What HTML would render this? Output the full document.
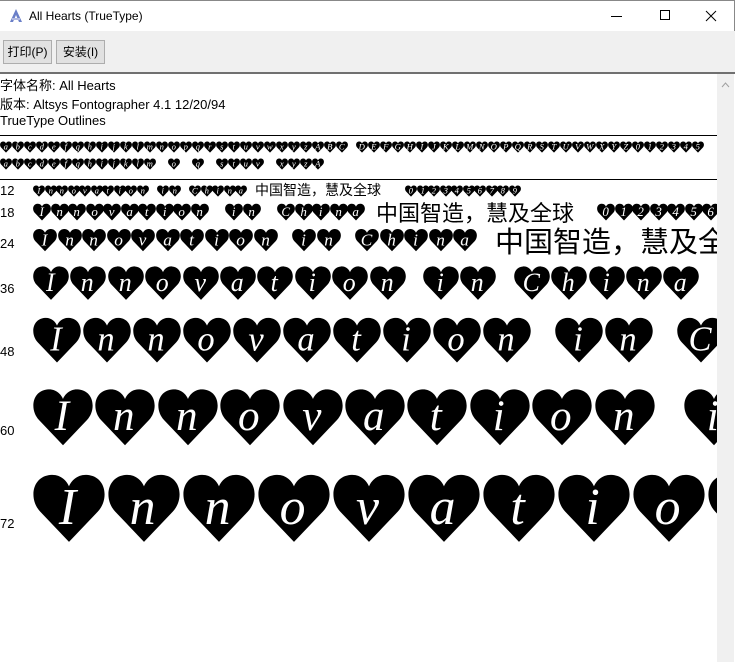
<!DOCTYPE html>
<html><head><meta charset="utf-8">
<style>
*{margin:0;padding:0;box-sizing:border-box}
body{width:735px;height:662px;overflow:hidden;background:#fff;font-family:"Liberation Sans","Noto Sans CJK SC",sans-serif;position:relative;color:#000}
.a{position:absolute;white-space:nowrap}
#title{left:0;top:0;width:735px;height:31px;background:#fff;border-top:1px solid #888;border-right:1px solid #888}
#tb{left:0;top:31px;width:735px;height:41px;background:#f0f0f0}
.btn{position:absolute;top:9px;height:24px;border:1px solid #adadad;background:#e1e1e1;font-size:12px;line-height:22px;text-align:center}
#sep{left:0;top:72px;width:735px;height:2px;background:#707070}
#sb{left:717px;top:74px;width:17px;height:588px;background:#f0f0f0}
.t{font-size:13px}
#view{left:0;top:74px;width:717px;height:588px;overflow:hidden}
.lbl{font-size:13px}
</style></head><body>
<div id="title" class="a">
<svg class="a" style="left:8px;top:7px" width="16" height="16" viewBox="0 0 16 16"><path d="M8 1 L2 14 L5 14 L8 7 L11 14 L14 14 Z" fill="#6a7fc8"/><path d="M4 11 L12 11" stroke="#b0b8e0" stroke-width="2"/></svg>
<div class="a" style="left:29px;top:8px;font-size:12px">All Hearts (TrueType)</div>
<div class="a" style="left:611px;top:15px;width:11px;height:1px;background:#000"></div>
<div class="a" style="left:660px;top:9px;width:10px;height:10px;border:1px solid #000"></div>
<svg class="a" style="left:705px;top:9px" width="12" height="12"><path d="M1 1 L11 11 M11 1 L1 11" stroke="#000" stroke-width="1"/></svg>
</div>
<div id="tb" class="a">
<div class="btn" style="left:3px;width:49px">打印(P)</div>
<div class="btn" style="left:56px;width:49px">安装(I)</div>
</div>
<div id="sep" class="a"></div>
<div id="sb" class="a"><svg class="a" style="left:4px;top:8px" width="9" height="6"><path d="M1 5 L4.5 1 L8 5" stroke="#a0a0a0" fill="none"/></svg></div>
<div id="view" class="a"></div>
<script>
const V=document.getElementById('view');
function add(h){V.insertAdjacentHTML('beforeend',h)}
add('<div class="a t" style="left:0;top:1px">字体名称: All Hearts</div>');
add('<div class="a t" style="left:0;top:20px">版本: Altsys Fontographer 4.1 12/20/94</div>');
add('<div class="a t" style="left:0;top:39px">TrueType Outlines</div>');
add('<div class="a" style="left:0;top:61px;width:717px;height:1px;background:#000"></div>');
add('<div class="a" style="left:0;top:105px;width:717px;height:1px;background:#000"></div>');
const HP="M50 97 L10 55 C-6 38 -2 6 25 4 C38 3 47 12 50 20 C53 12 62 3 75 4 C102 6 106 38 90 55 Z";
function heart(x,y,s,ch){
 return `<svg class="a" style="left:${x}px;top:${y}px" width="${s}" height="${s}" viewBox="0 0 100 100"><path d="${HP}" fill="#000"/>`+
 (ch?`<text x="48" y="72" text-anchor="middle" font-family="Liberation Serif,serif" font-style="italic" font-size="72" fill="#fff">${ch}</text>`:'')+`</svg>`;
}
const a1="abcdefghijklmnopqrstuvwxyzABCDEFGHIJKLMNOPQRSTUVWXYZ0123456";
let x=0;for(let i=0;i<58&&x<697;i++){ if(i==29){x+=8;} add(heart(x,67,12,a1[i])); x+=12;}
const r2=[1,1,1,1,1,1,1,1,1,1,1,1,1,0,1,0,1,0,1,1,1,1,0,1,1,1,1];
x=0;r2.forEach((v,i)=>{ if(v)add(heart(x,84,12,a1[i])); x+=12;});
// [size, top, labelY, cnX, step, space, cnFont, digitsX]
const rows=[[12,111,191,255,11.5,9,14,405],[18,129,213,376,17.5,17,22,597],[24,154,244,495,24.5,14,29,0],[36,191,289,0,37.4,16],[48,242,352,0,50,22],[60,313,431,0,62.4,27],[72,398,524,0,75,32]];
const words=["Innovation","in","China"];
rows.forEach(([s,top,ly,cx,step,sp,cf,dx])=>{
 add(`<div class="a lbl" style="left:0;top:${ly-74-8}px">${s}</div>`);
 let x=33;
 words.forEach((w,wi)=>{ for(const c of w){ if(x<720) add(heart(Math.round(x),top,s,c)); x+=step;} x+=sp; });
 if(cx){
  add(`<div class="a" style="left:${cx}px;top:${top+s/2-cf*0.7}px;font-size:${cf}px;font-family:'Noto Sans CJK SC',sans-serif;line-height:${cf*1.4}px">中国智造，慧及全球</div>`);
  if(dx){let xx=dx;
  for(const c of "0123456789"){ if(xx<720) add(heart(Math.round(xx),top,s,c)); xx+=step;}}
 }
});
</script>
</body></html>
